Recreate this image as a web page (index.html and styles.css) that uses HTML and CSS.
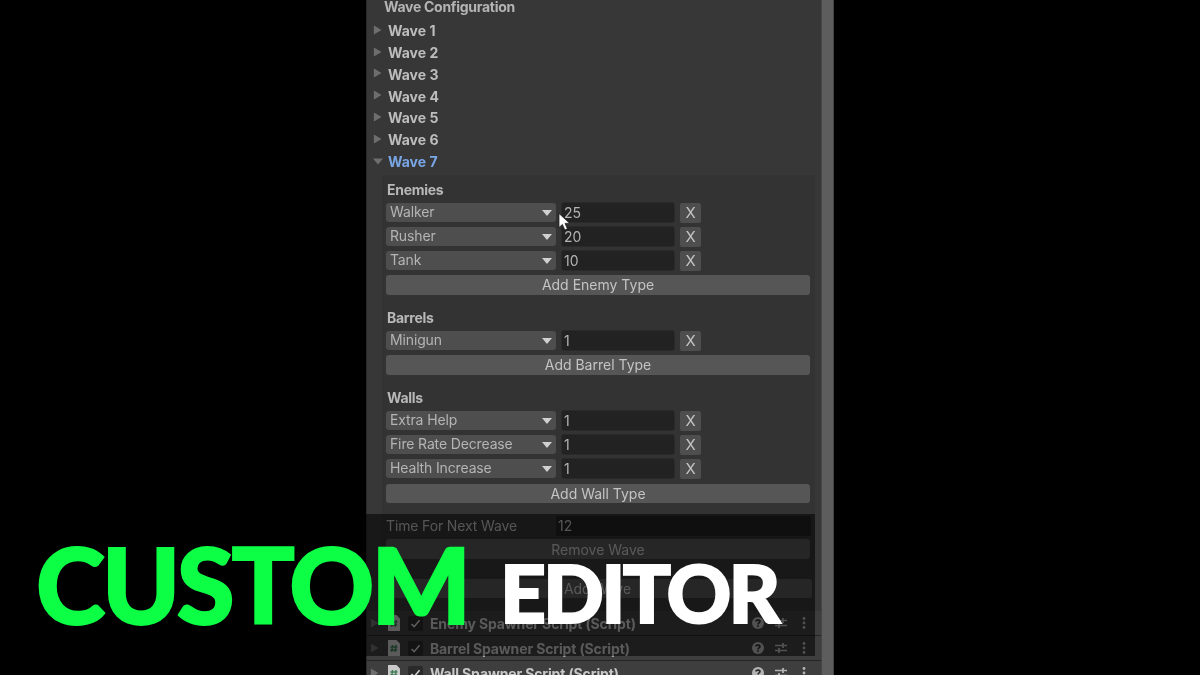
FILE: index.html
```html
<!DOCTYPE html>
<html lang="en">
<head>
<meta charset="utf-8">
<title>Custom Editor</title>
<link rel="stylesheet" href="styles.css">
</head>
<body>
<svg class="defs" width="0" height="0" aria-hidden="true">
  <symbol id="arrow" viewBox="0 0 10 10"><path d="M1 0 L9.5 5 L1 10 Z"/></symbol>
  <symbol id="drop" viewBox="0 0 10 6"><path d="M0 0 H10 L5 6 Z"/></symbol>
  <symbol id="script" viewBox="0 0 14 16"><path fill="#c9c9c9" d="M1 0 H9.5 L13 3.5 V16 H1 Z"/><path fill="none" stroke="#3f7d55" stroke-width="1.4" d="M5.5 5 L4.8 12 M9 5 L8.3 12 M3.4 7 H10.4 M3.2 10 H10.2"/></symbol>
  <symbol id="help" viewBox="0 0 12 12"><circle cx="6" cy="6" r="6" fill="#b4b4b4"/><path fill="none" stroke="#2a2a2a" stroke-width="1.6" d="M4 4.6 C4 2.6 8 2.6 8 4.6 C8 6 6 5.8 6 7.4"/><rect x="5.2" y="8.3" width="1.6" height="1.6" fill="#2a2a2a"/></symbol>
  <symbol id="sliders" viewBox="0 0 12 12"><path fill="none" stroke="#b4b4b4" stroke-width="1.4" d="M0 3.5 H12 M0 8.5 H12"/><path fill="none" stroke="#b4b4b4" stroke-width="1.8" d="M8 1 V6 M4 6 V11"/></symbol>
  <symbol id="kebab" viewBox="0 0 4 12"><circle cx="2" cy="1.5" r="1.4" fill="#b4b4b4"/><circle cx="2" cy="6" r="1.4" fill="#b4b4b4"/><circle cx="2" cy="10.5" r="1.4" fill="#b4b4b4"/></symbol>
  <symbol id="check" viewBox="0 0 12 10"><path fill="none" stroke="#d2d2d2" stroke-width="1.7" d="M1.5 5.5 L4.5 8.5 L10.5 1.5"/></symbol>
</svg>

<main class="panel">
  <div class="content">
    <div class="heading">Wave Configuration</div>
    <ul class="waves">
      <li class="wave"><svg class="fold"><use href="#arrow"/></svg>Wave 1</li>
      <li class="wave"><svg class="fold"><use href="#arrow"/></svg>Wave 2</li>
      <li class="wave"><svg class="fold"><use href="#arrow"/></svg>Wave 3</li>
      <li class="wave"><svg class="fold"><use href="#arrow"/></svg>Wave 4</li>
      <li class="wave"><svg class="fold"><use href="#arrow"/></svg>Wave 5</li>
      <li class="wave"><svg class="fold"><use href="#arrow"/></svg>Wave 6</li>
      <li class="wave open"><svg class="fold"><use href="#drop"/></svg>Wave 7</li>
    </ul>
    <section class="box">
      <div class="group">
        <div class="label">Enemies</div>
        <div class="row"><div class="select"><span>Walker</span><svg class="caret"><use href="#drop"/></svg></div><div class="num">25</div><div class="x">X</div></div>
        <div class="row"><div class="select"><span>Rusher</span><svg class="caret"><use href="#drop"/></svg></div><div class="num">20</div><div class="x">X</div></div>
        <div class="row"><div class="select"><span>Tank</span><svg class="caret"><use href="#drop"/></svg></div><div class="num">10</div><div class="x">X</div></div>
        <div class="btn">Add Enemy Type</div>
      </div>
      <div class="group">
        <div class="label">Barrels</div>
        <div class="row"><div class="select"><span>Minigun</span><svg class="caret"><use href="#drop"/></svg></div><div class="num">1</div><div class="x">X</div></div>
        <div class="btn">Add Barrel Type</div>
      </div>
      <div class="group">
        <div class="label">Walls</div>
        <div class="row"><div class="select"><span>Extra Help</span><svg class="caret"><use href="#drop"/></svg></div><div class="num">1</div><div class="x">X</div></div>
        <div class="row"><div class="select"><span>Fire Rate Decrease</span><svg class="caret"><use href="#drop"/></svg></div><div class="num">1</div><div class="x">X</div></div>
        <div class="row"><div class="select"><span>Health Increase</span><svg class="caret"><use href="#drop"/></svg></div><div class="num">1</div><div class="x">X</div></div>
        <div class="btn">Add Wall Type</div>
      </div>
      <div class="field"><span class="field-name">Time For Next Wave</span><div class="field-val">12</div></div>
      <div class="btn remove">Remove Wave</div>
    </section>
    <div class="btn add-wave">Add Wave</div>
    <div class="comp"><svg class="fold"><use href="#arrow"/></svg><svg class="ic"><use href="#script"/></svg><span class="cb"><svg class="ck"><use href="#check"/></svg></span><span class="cname">Enemy Spawner Script (Script)</span><svg class="tool"><use href="#help"/></svg><svg class="tool"><use href="#sliders"/></svg><svg class="keb"><use href="#kebab"/></svg></div>
    <div class="comp"><svg class="fold"><use href="#arrow"/></svg><svg class="ic"><use href="#script"/></svg><span class="cb"><svg class="ck"><use href="#check"/></svg></span><span class="cname">Barrel Spawner Script (Script)</span><svg class="tool"><use href="#help"/></svg><svg class="tool"><use href="#sliders"/></svg><svg class="keb"><use href="#kebab"/></svg></div>
    <div class="comp"><svg class="fold"><use href="#arrow"/></svg><svg class="ic"><use href="#script"/></svg><span class="cb"><svg class="ck"><use href="#check"/></svg></span><span class="cname">Wall Spawner Script (Script)</span><svg class="tool"><use href="#help"/></svg><svg class="tool"><use href="#sliders"/></svg><svg class="keb"><use href="#kebab"/></svg></div>
  </div>
  <div class="scrollbar"></div>
  <div class="dim"></div>
  <svg class="cursor" viewBox="0 0 12 18"><path d="M1 0.5 V14.5 L4.4 11.4 L6.8 17 L9.4 15.8 L7 10.4 L11.6 10.2 Z" fill="#fff" stroke="#111" stroke-width="0.7"/></svg>
</main>

<h1 class="title"><span class="custom">CUSTOM</span><span class="editor">EDITOR</span></h1>
</body>
</html>
```
FILE: styles.css
```css
* { box-sizing: border-box; }
html, body { margin: 0; height: 675px; overflow: hidden; background: #000; }
body { position: relative; display: flex; justify-content: center; font-family: Inter, "Liberation Sans", sans-serif; }
.defs { position: absolute; }

.panel { position: relative; width: 468px; height: 675px; display: flex; overflow: hidden; filter: blur(0.45px); }
.content { flex: 1; min-width: 0; background: #373737; border-left: 1px solid #2a2a2a; color: #c4c4c4; }
.scrollbar { width: 13px; background: #5d5d5d; border-left: 1px solid #454545; border-right: 1px solid #444; }

.heading { height: 20px; padding-left: 17px; font-size: 14px; font-weight: 700; line-height: 14px; letter-spacing: -0.02em; color: #b4b4b4; }
.waves { list-style: none; margin: 0; padding: 0; }
.wave { height: 21.75px; display: flex; align-items: center; font-size: 14px; font-weight: 700; color: #bdbdbd; }
.wave.open { color: #79a7e6; }
.fold { width: 9px; height: 10px; margin: 0 6px 2px 6px; fill: #6e6e6e; flex: none; }
.open .fold { width: 10px; height: 7px; margin: 0 5px 0 6px; }

.box { width: 433px; margin: 2.75px 0 0 15px; padding: 6px 5px 0 4px; background: #333; }
.group { display: flex; flex-direction: column; gap: 5px; margin-bottom: 14px; }
.group .label { height: 17px; padding-left: 1px; font-size: 14px; font-weight: 700; line-height: 18px; letter-spacing: -0.02em; color: #b8b8b8; }
.row { display: flex; height: 19px; gap: 5px; font-size: 14px; color: #b4b4b4; }
.select { width: 170px; height: 19px; padding: 0 4px; display: flex; align-items: center; justify-content: space-between; background: #4e4e4e; border-radius: 3px; line-height: 17px; }
.select span { padding-bottom: 2px; letter-spacing: -0.01em; }
.caret { width: 10px; height: 6px; fill: #d0d0d0; margin-right: 0; }
.num { width: 114px; height: 21px; margin-top: -1px; padding-left: 2px; background: #222; border: 1px solid #2a2a2a; border-radius: 3px; line-height: 19px; }
.x { width: 21px; height: 20px; background: #4e4e4e; border-radius: 2px; text-align: center; font-size: 15px; line-height: 20px; color: #c6c6c6; }
.btn { height: 20px; background: #565656; border-radius: 3px; text-align: center; font-size: 14px; line-height: 20px; color: #c4c4c4; }

.group:nth-child(3) { margin-bottom: 13px; }
.group:nth-child(3) .btn { margin-top: 1px; height: 19px; line-height: 19px; }
.field { display: flex; align-items: center; height: 20px; font-size: 14px; color: #bdbdbd; }
.field-name { width: 170px; margin-bottom: 1px; letter-spacing: -0.01em; }
.field-val { flex: 1; height: 20px; padding-left: 2px; margin-right: -1px; line-height: 20px; background: #222; border-radius: 3px; }
.remove { margin-top: 3px; line-height: 21px; }
.add-wave { width: 429px; margin: 20px 0 13px 16px; height: 19px; line-height: 19px; }

.comp { display: flex; align-items: center; height: 25px; background: #3e3e3e; border-bottom: 1px solid #242424; font-size: 14px; font-weight: 700; color: #c8c8c8; }
.comp .fold { margin: 0 8px 0 3px; }
.ic { width: 14px; height: 16px; margin-right: 7px; flex: none; }
.cb { width: 15px; height: 15px; margin-right: 7px; display: flex; align-items: center; justify-content: center; background: #2a2a2a; border-radius: 2px; flex: none; }
.ck { width: 11px; height: 9px; }
.cname { flex: 1; min-width: 0; white-space: nowrap; letter-spacing: -0.01em; }
.tool { width: 12px; height: 12px; margin-right: 11px; flex: none; }
.tool + .tool { margin-right: 15px; }
.keb { width: 4px; height: 12px; margin-right: 15px; flex: none; }

.dim { position: absolute; left: 0; top: 514px; width: 449px; height: 142px; background: rgba(0,0,0,.55); }
.cursor { position: absolute; left: 192px; top: 213px; width: 12px; height: 18px; }

.title { position: absolute; left: 0; top: 0; margin: 0; font-family: Lato, Inter, sans-serif; font-weight: 900; }
.custom, .editor { position: absolute; line-height: 1; white-space: nowrap; }
.custom { left: 36px; top: 531px; font-size: 105px; letter-spacing: -3.3px; color: #0cff45; -webkit-text-stroke: 2px #0cff45; }
.editor { left: 500px; top: 552px; font-size: 80px; letter-spacing: -2.8px; color: #fff; -webkit-text-stroke: 2px #fff; }
```
